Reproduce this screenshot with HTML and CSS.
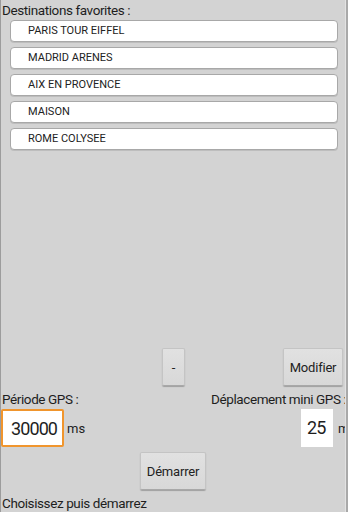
FILE: index.html
```html
<!DOCTYPE html>
<html lang="fr">
<head>
    <meta charset="UTF-8">
    <meta name="viewport" content="width=device-width, initial-scale=1.0">
    <title>Destinations favorites</title>
    <link rel="stylesheet" href="styles.css">
</head>
<body>
    <div class="screen">
        <div class="title">Destinations favorites :</div>

        <div class="fav-list">
            <div class="fav-item">PARIS TOUR EIFFEL</div>
            <div class="fav-item">MADRID ARENES</div>
            <div class="fav-item">AIX EN PROVENCE</div>
            <div class="fav-item">MAISON</div>
            <div class="fav-item">ROME COLYSEE</div>
        </div>

        <div class="spacer"></div>

        <div class="btn-row">
            <button class="btn btn-minus">-</button>
            <button class="btn btn-edit">Modifier</button>
        </div>

        <div class="label-row">
            <span class="label">Période GPS :</span>
            <span class="label label-right">Déplacement mini GPS :</span>
        </div>

        <div class="input-row">
            <div class="field-group">
                <div class="field field-focus">30000</div>
                <span class="unit">ms</span>
            </div>
            <div class="field-group">
                <div class="field field-small">25</div>
                <span class="unit">m</span>
            </div>
        </div>

        <div class="start-row">
            <button class="btn btn-start">Démarrer</button>
        </div>

        <div class="status">Choisissez puis démarrez</div>
    </div>
</body>
</html>
```

FILE: styles.css
```css
* {
    margin: 0;
    padding: 0;
    box-sizing: border-box;
}

body {
    font-family: Roboto, "Noto Sans", sans-serif;
    background-color: #a9a9a9;
    color: #1e1e1e;
    width: 348px;
    height: 512px;
    overflow: hidden;
}

.screen {
    width: 346px;
    height: 512px;
    background-color: #d3d3d3;
    border-left: 1px solid #9c9c9c;
    border-right: 1px solid #e2e2e2;
    display: flex;
    flex-direction: column;
    overflow: hidden;
}

.title {
    font-size: 13.5px;
    letter-spacing: -0.4px;
    line-height: 18px;
    height: 20px;
    padding-left: 1px;
    padding-top: 1px;
}

.fav-list {
    display: flex;
    flex-direction: column;
    gap: 5px;
    margin: 0 7px 0 9px;
}

.fav-item {
    height: 22px;
    background: white;
    border: 1px solid #a8a8a8;
    border-radius: 4px;
    box-shadow: 0 1px 0 #bdbdbd;
    font-size: 11px;
    line-height: 20px;
    padding-left: 17px;
    color: #222;
}

.spacer {
    flex: 1;
}

.btn {
    font-family: Roboto, "Noto Sans", sans-serif;
    font-size: 13px;
    letter-spacing: -0.2px;
    color: #222;
    height: 38px;
    background: linear-gradient(#e1e1e1, #d8d8d8);
    border: 1px solid #c4c4c4;
    border-bottom-color: #a8a8a8;
    border-radius: 2px;
    box-shadow: 0 1px 1px rgba(0, 0, 0, 0.25);
}

.btn-row {
    height: 38px;
    display: flex;
}

.btn-minus {
    width: 23px;
    margin-left: 161px;
}

.btn-edit {
    width: 60px;
    margin-left: auto;
    margin-right: 2px;
}

.label-row {
    height: 23px;
    display: flex;
    align-items: center;
    white-space: nowrap;
}

.label {
    font-size: 13.5px;
    letter-spacing: -0.4px;
    padding-top: 3px;
    flex-shrink: 0;
}

.label:first-child {
    padding-left: 1px;
    width: 210px;
}

.input-row {
    height: 38px;
    display: flex;
    white-space: nowrap;
}

.field-group {
    display: flex;
    align-items: center;
    flex-shrink: 0;
}

.field-group:first-child {
    width: 300px;
}

.field {
    height: 38px;
    background: white;
    font-size: 18px;
    letter-spacing: -0.9px;
    line-height: 36px;
    color: #1e1e1e;
}

.field-focus {
    width: 63px;
    border: 2px solid #f0952d;
    border-radius: 2px;
    padding-left: 8px;
}

.field-small {
    width: 32px;
    padding-left: 6px;
    line-height: 38px;
}

.unit {
    font-size: 13px;
    margin-left: 3px;
}

.field-small + .unit {
    margin-left: 5px;
}

.start-row {
    height: 38px;
    margin-top: 5px;
    display: flex;
}

.btn-start {
    width: 66px;
    margin-left: 139px;
}

.status {
    height: 22px;
    font-size: 13.5px;
    letter-spacing: -0.4px;
    line-height: 18px;
    padding-top: 4px;
    padding-left: 1px;
}
```
